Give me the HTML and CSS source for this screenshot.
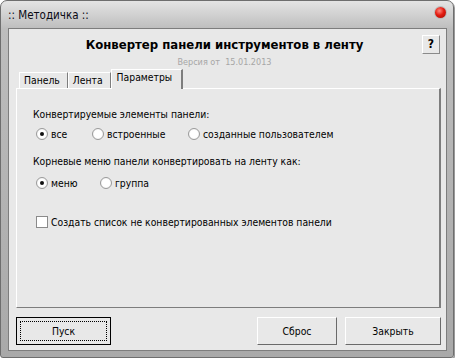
FILE: index.html
```html
<!DOCTYPE html>
<html lang="ru">
<head>
  <meta charset="UTF-8" />
  <title>:: Методичка ::</title>
  <link rel="stylesheet" href="styles.css">
</head>
<body>
  <div class="window">
    <div class="titlebar">
      <span class="caption">:: Методичка ::</span>
      <span class="close"></span>
    </div>

    <div class="client">
      <div class="header">
        <div class="title">Конвертер панели инструментов в ленту</div>
        <div class="help">?</div>
        <div class="version">Версия от&nbsp; 15.01.2013</div>
      </div>

      <div class="tabs">
        <div class="tab">Панель</div>
        <div class="tab">Лента</div>
        <div class="tab active">Параметры</div>
      </div>

      <div class="panel">
        <div class="label">Конвертируемые элементы панели:</div>
        <div class="options first">
          <div class="opt w56"><span class="radio checked"></span>все</div>
          <div class="opt w96"><span class="radio"></span>встроенные</div>
          <div class="opt"><span class="radio"></span>созданные пользователем</div>
        </div>

        <div class="label second">Корневые меню панели конвертировать на ленту как:</div>
        <div class="options">
          <div class="opt w64"><span class="radio checked"></span>меню</div>
          <div class="opt"><span class="radio"></span>группа</div>
        </div>

        <div class="opt check-row"><span class="checkbox"></span>Создать список не конвертированных элементов панели</div>
      </div>

      <div class="buttons">
        <div class="btn default"><span class="focus">Пуск</span></div>
        <div class="spacer"></div>
        <div class="btn reset">Сброс</div>
        <div class="btn">Закрыть</div>
      </div>
    </div>
  </div>
</body>
</html>
```

FILE: styles.css
```css
* {
  box-sizing: border-box;
}

body {
  margin: 0;
  background: #fff;
  font-family: Tahoma, "DejaVu Sans Condensed", "Liberation Sans", sans-serif;
  font-size: 10.3px;
  color: #000;
}

.window {
  width: 454px;
  height: 358px;
  border: 1px solid #6e6e6e;
  border-radius: 7px 7px 3px 3px;
  background: linear-gradient(to bottom, #e4e4e4 0px, #bdbdbd 28px, #a9a9a9 100%);
  box-shadow: 1px 1px 0 #9a9a9a;
  display: flex;
  flex-direction: column;
}

.titlebar {
  flex-shrink: 0;
  height: 27px;
  display: flex;
  align-items: center;
  justify-content: space-between;
  padding: 0 7px 0 7px;
}

.caption {
  font-size: 11.5px;
  color: #0a0a14;
  margin-top: 1px;
}

.close {
  width: 11px;
  height: 11px;
  border-radius: 50%;
  background: radial-gradient(circle at 40% 35%, #ff8a80 0, #e31b10 45%, #9c0c05 100%);
  box-shadow: 0 0 0 1px #b9b9b9;
  margin-top: -4px;
}

.client {
  flex: 1;
  min-height: 0;
  margin: 0 6px 6px 7px;
  border: 1px solid #7d7d7d;
  background: #e8e8e8;
  display: flex;
  flex-direction: column;
  padding: 0 5px 6px 7px;
}

/* header */
.header {
  display: grid;
  grid-template-columns: 1fr auto 1fr;
  padding: 6px 6px 0 0;
  margin: 0 -5px 0 -7px;
}

.title {
  grid-column: 2;
  grid-row: 1;
  font-size: 13px;
  font-weight: bold;
  margin-top: 2px;
  line-height: 16px;
}

.help {
  grid-column: 3;
  grid-row: 1;
  justify-self: end;
  width: 18px;
  height: 19px;
  border: 1px solid #fff;
  border-right-color: #8a8a8a;
  border-bottom-color: #8a8a8a;
  font-weight: bold;
  font-size: 12px;
  text-align: center;
  line-height: 17px;
}

.version {
  grid-column: 2;
  grid-row: 2;
  text-align: center;
  color: #a6a6a6;
  font-size: 9px;
  line-height: 12px;
  margin-top: 2px;
}

/* tabs */
.tabs {
  flex-shrink: 0;
  display: flex;
  align-items: flex-end;
  margin-top: 1px;
  padding-left: 3px;
  height: 19px;
  position: relative;
  z-index: 1;
}

.tab {
  height: 16px;
  padding: 0 7px 0 4px;
  line-height: 15px;
  border: 1px solid #fff;
  border-bottom: none;
  border-right-color: #7d7d7d;
  background: #e8e8e8;
}

.tab.active {
  height: 20px;
  line-height: 14px;
  padding: 0 9px 0 5px;
  margin-bottom: -1px;
  border-right: 2px solid #7d7d7d;
}

.panel {
  flex-shrink: 0;
  height: 220px;
  border: 1px solid #fff;
  border-right: 2px solid #7d7d7d;
  border-bottom: 1px solid #7d7d7d;
  padding: 18px 0 0 16px;
}

.label {
  line-height: 14px;
}

.label.second {
  margin-top: 12px;
}

.options {
  display: flex;
  margin-top: 7px;
  padding-left: 3px;
}

.options.first {
  margin-top: 5px;
}

.opt {
  display: flex;
  align-items: center;
  height: 16px;
}

.w56 { width: 56px; }
.w96 { width: 96px; }
.w64 { width: 64px; }

.radio {
  width: 12px;
  height: 12px;
  border-radius: 50%;
  border: 1px solid #9a9a9a;
  background: radial-gradient(circle, #fff 50%, #e2e2e2 100%);
  margin-right: 3px;
  position: relative;
}

.radio.checked::after {
  content: "";
  position: absolute;
  left: 3px;
  top: 3px;
  width: 4px;
  height: 4px;
  border-radius: 50%;
  background: #111;
}

.check-row {
  margin-top: 23px;
  padding-left: 3px;
}

.checkbox {
  width: 12px;
  height: 12px;
  border: 1px solid #8a8a8a;
  background: #fff;
  margin-right: 3px;
}

/* buttons */
.buttons {
  flex-shrink: 0;
  display: flex;
  margin-top: 9px;
}

.spacer {
  flex: 1;
}

.btn {
  width: 96px;
  height: 28px;
  border: 1px solid #fff;
  border-right-color: #6a6a6a;
  border-bottom-color: #6a6a6a;
  display: flex;
  align-items: center;
  justify-content: center;
}

.btn.reset {
  width: 80px;
  margin-right: 8px;
}

.btn.default {
  border: 1px solid #000;
  padding: 3px;
  width: 95px;
}

.btn .focus {
  flex: 1;
  align-self: stretch;
  border: 1px dotted #000;
  display: flex;
  align-items: center;
  justify-content: center;
}
```
